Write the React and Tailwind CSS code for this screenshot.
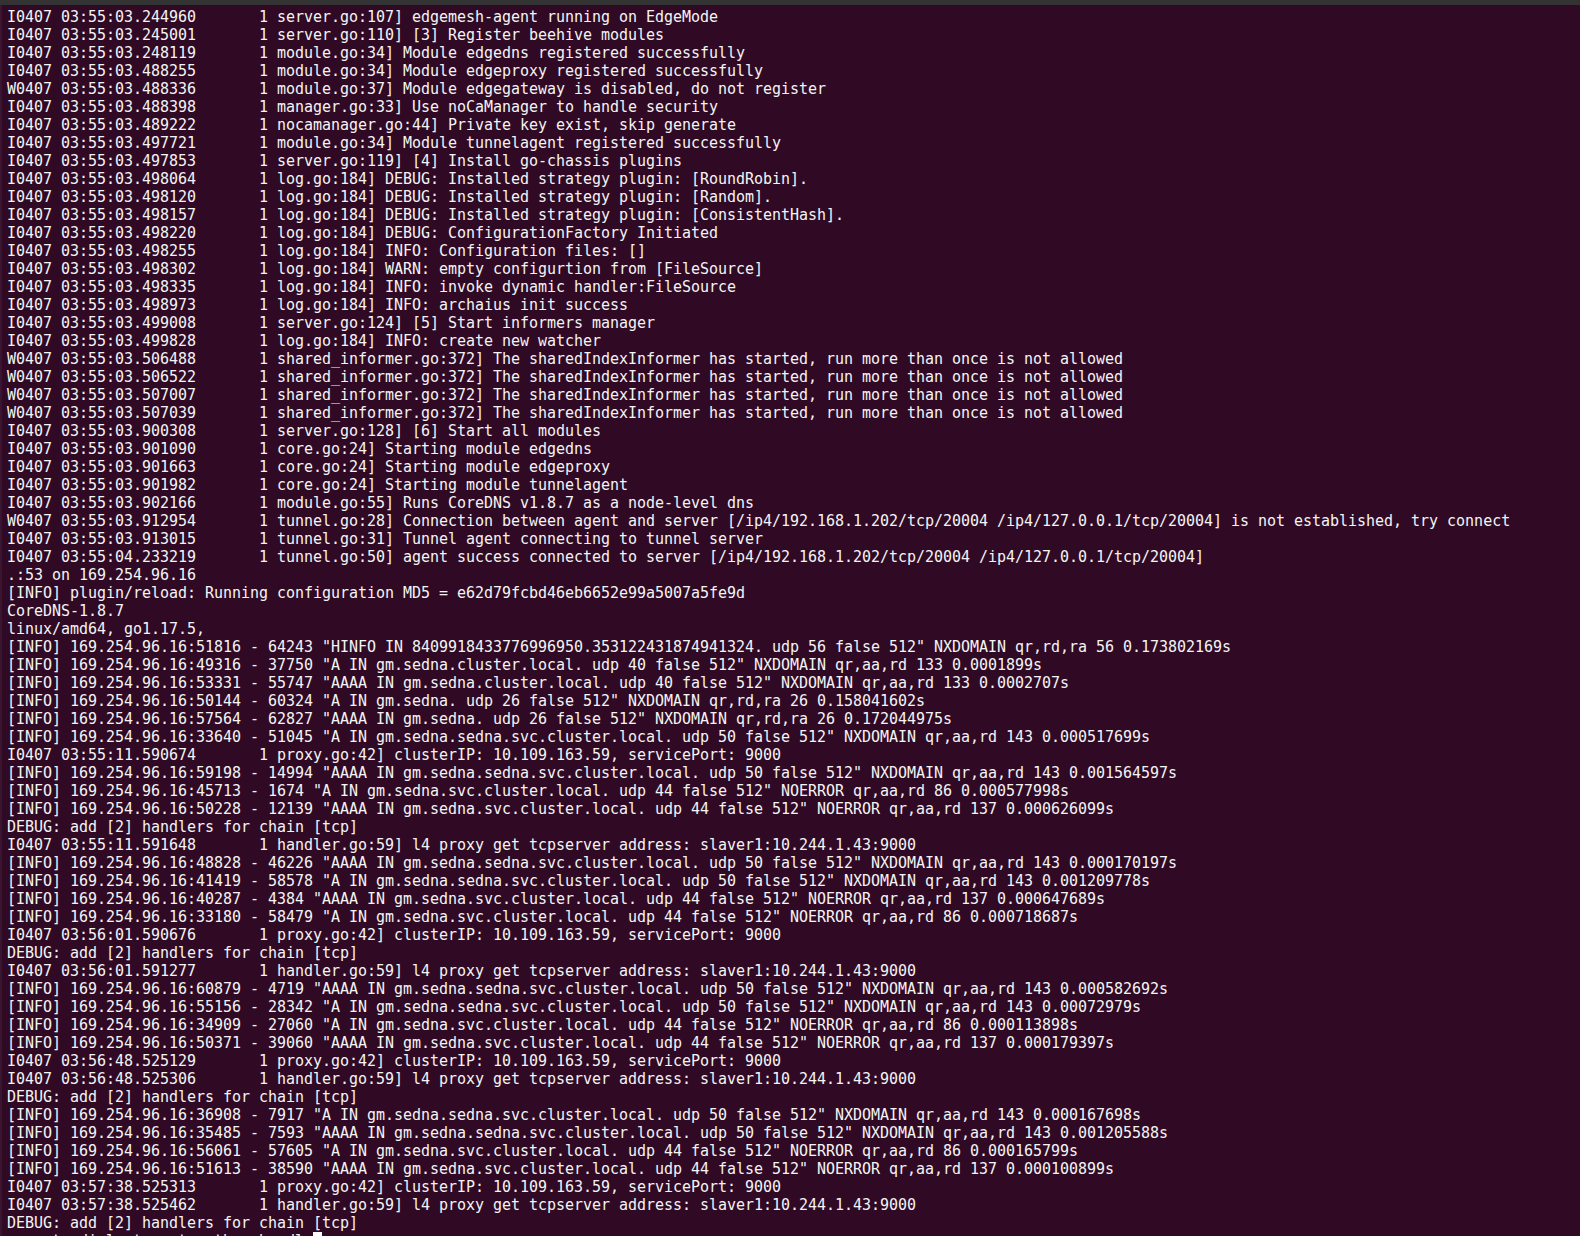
const klog = (lvl, time, src, msg) => `${lvl}0407 ${time}       1 ${src}] ${msg}`;

const informer = 'The sharedIndexInformer has started, run more than once is not allowed';
const tunnelPeers = '[/ip4/192.168.1.202/tcp/20004 /ip4/127.0.0.1/tcp/20004]';
const proxyMsg = 'clusterIP: 10.109.163.59, servicePort: 9000';
const handlerMsg = 'l4 proxy get tcpserver address: slaver1:10.244.1.43:9000';
const chain = 'DEBUG: add [2] handlers for chain [tcp]';
const dns = (port, id, q) => `[INFO] 169.254.96.16:${port} - ${id} ${q}`;

const LINES = [
  klog('I', '03:55:03.244960', 'server.go:107', 'edgemesh-agent running on EdgeMode'),
  klog('I', '03:55:03.245001', 'server.go:110', '[3] Register beehive modules'),
  klog('I', '03:55:03.248119', 'module.go:34', 'Module edgedns registered successfully'),
  klog('I', '03:55:03.488255', 'module.go:34', 'Module edgeproxy registered successfully'),
  klog('W', '03:55:03.488336', 'module.go:37', 'Module edgegateway is disabled, do not register'),
  klog('I', '03:55:03.488398', 'manager.go:33', 'Use noCaManager to handle security'),
  klog('I', '03:55:03.489222', 'nocamanager.go:44', 'Private key exist, skip generate'),
  klog('I', '03:55:03.497721', 'module.go:34', 'Module tunnelagent registered successfully'),
  klog('I', '03:55:03.497853', 'server.go:119', '[4] Install go-chassis plugins'),
  klog('I', '03:55:03.498064', 'log.go:184', 'DEBUG: Installed strategy plugin: [RoundRobin].'),
  klog('I', '03:55:03.498120', 'log.go:184', 'DEBUG: Installed strategy plugin: [Random].'),
  klog('I', '03:55:03.498157', 'log.go:184', 'DEBUG: Installed strategy plugin: [ConsistentHash].'),
  klog('I', '03:55:03.498220', 'log.go:184', 'DEBUG: ConfigurationFactory Initiated'),
  klog('I', '03:55:03.498255', 'log.go:184', 'INFO: Configuration files: []'),
  klog('I', '03:55:03.498302', 'log.go:184', 'WARN: empty configurtion from [FileSource]'),
  klog('I', '03:55:03.498335', 'log.go:184', 'INFO: invoke dynamic handler:FileSource'),
  klog('I', '03:55:03.498973', 'log.go:184', 'INFO: archaius init success'),
  klog('I', '03:55:03.499008', 'server.go:124', '[5] Start informers manager'),
  klog('I', '03:55:03.499828', 'log.go:184', 'INFO: create new watcher'),
  klog('W', '03:55:03.506488', 'shared_informer.go:372', informer),
  klog('W', '03:55:03.506522', 'shared_informer.go:372', informer),
  klog('W', '03:55:03.507007', 'shared_informer.go:372', informer),
  klog('W', '03:55:03.507039', 'shared_informer.go:372', informer),
  klog('I', '03:55:03.900308', 'server.go:128', '[6] Start all modules'),
  klog('I', '03:55:03.901090', 'core.go:24', 'Starting module edgedns'),
  klog('I', '03:55:03.901663', 'core.go:24', 'Starting module edgeproxy'),
  klog('I', '03:55:03.901982', 'core.go:24', 'Starting module tunnelagent'),
  klog('I', '03:55:03.902166', 'module.go:55', 'Runs CoreDNS v1.8.7 as a node-level dns'),
  klog('W', '03:55:03.912954', 'tunnel.go:28', `Connection between agent and server ${tunnelPeers} is not established, try connect`),
  klog('I', '03:55:03.913015', 'tunnel.go:31', 'Tunnel agent connecting to tunnel server'),
  klog('I', '03:55:04.233219', 'tunnel.go:50', `agent success connected to server ${tunnelPeers}`),
  '.:53 on 169.254.96.16',
  '[INFO] plugin/reload: Running configuration MD5 = e62d79fcbd46eb6652e99a5007a5fe9d',
  'CoreDNS-1.8.7',
  'linux/amd64, go1.17.5,',
  dns('51816', '64243', '"HINFO IN 8409918433776996950.353122431874941324. udp 56 false 512" NXDOMAIN qr,rd,ra 56 0.173802169s'),
  dns('49316', '37750', '"A IN gm.sedna.cluster.local. udp 40 false 512" NXDOMAIN qr,aa,rd 133 0.0001899s'),
  dns('53331', '55747', '"AAAA IN gm.sedna.cluster.local. udp 40 false 512" NXDOMAIN qr,aa,rd 133 0.0002707s'),
  dns('50144', '60324', '"A IN gm.sedna. udp 26 false 512" NXDOMAIN qr,rd,ra 26 0.158041602s'),
  dns('57564', '62827', '"AAAA IN gm.sedna. udp 26 false 512" NXDOMAIN qr,rd,ra 26 0.172044975s'),
  dns('33640', '51045', '"A IN gm.sedna.sedna.svc.cluster.local. udp 50 false 512" NXDOMAIN qr,aa,rd 143 0.000517699s'),
  klog('I', '03:55:11.590674', 'proxy.go:42', proxyMsg),
  dns('59198', '14994', '"AAAA IN gm.sedna.sedna.svc.cluster.local. udp 50 false 512" NXDOMAIN qr,aa,rd 143 0.001564597s'),
  dns('45713', '1674', '"A IN gm.sedna.svc.cluster.local. udp 44 false 512" NOERROR qr,aa,rd 86 0.000577998s'),
  dns('50228', '12139', '"AAAA IN gm.sedna.svc.cluster.local. udp 44 false 512" NOERROR qr,aa,rd 137 0.000626099s'),
  chain,
  klog('I', '03:55:11.591648', 'handler.go:59', handlerMsg),
  dns('48828', '46226', '"AAAA IN gm.sedna.sedna.svc.cluster.local. udp 50 false 512" NXDOMAIN qr,aa,rd 143 0.000170197s'),
  dns('41419', '58578', '"A IN gm.sedna.sedna.svc.cluster.local. udp 50 false 512" NXDOMAIN qr,aa,rd 143 0.001209778s'),
  dns('40287', '4384', '"AAAA IN gm.sedna.svc.cluster.local. udp 44 false 512" NOERROR qr,aa,rd 137 0.000647689s'),
  dns('33180', '58479', '"A IN gm.sedna.svc.cluster.local. udp 44 false 512" NOERROR qr,aa,rd 86 0.000718687s'),
  klog('I', '03:56:01.590676', 'proxy.go:42', proxyMsg),
  chain,
  klog('I', '03:56:01.591277', 'handler.go:59', handlerMsg),
  dns('60879', '4719', '"AAAA IN gm.sedna.sedna.svc.cluster.local. udp 50 false 512" NXDOMAIN qr,aa,rd 143 0.000582692s'),
  dns('55156', '28342', '"A IN gm.sedna.sedna.svc.cluster.local. udp 50 false 512" NXDOMAIN qr,aa,rd 143 0.00072979s'),
  dns('34909', '27060', '"A IN gm.sedna.svc.cluster.local. udp 44 false 512" NOERROR qr,aa,rd 86 0.000113898s'),
  dns('50371', '39060', '"AAAA IN gm.sedna.svc.cluster.local. udp 44 false 512" NOERROR qr,aa,rd 137 0.000179397s'),
  klog('I', '03:56:48.525129', 'proxy.go:42', proxyMsg),
  klog('I', '03:56:48.525306', 'handler.go:59', handlerMsg),
  chain,
  dns('36908', '7917', '"A IN gm.sedna.sedna.svc.cluster.local. udp 50 false 512" NXDOMAIN qr,aa,rd 143 0.000167698s'),
  dns('35485', '7593', '"AAAA IN gm.sedna.sedna.svc.cluster.local. udp 50 false 512" NXDOMAIN qr,aa,rd 143 0.001205588s'),
  dns('56061', '57605', '"A IN gm.sedna.svc.cluster.local. udp 44 false 512" NOERROR qr,aa,rd 86 0.000165799s'),
  dns('51613', '38590', '"AAAA IN gm.sedna.svc.cluster.local. udp 44 false 512" NOERROR qr,aa,rd 137 0.000100899s'),
  klog('I', '03:57:38.525313', 'proxy.go:42', proxyMsg),
  klog('I', '03:57:38.525462', 'handler.go:59', handlerMsg),
  chain,
];

// ─── Terminal window ──────────────────────────────────────────────────────────

export default function App() {
  return (
    <div className="h-[1236px] w-[1580px] overflow-hidden bg-[#300a24] flex flex-col">
      {/* window chrome strip */}
      <div className="h-[5px] shrink-0 bg-[#333333]" />

      <div
        className="flex-1 border-l-2 border-[#3a1530] pl-[5px] pt-[3px] text-[15px] leading-[18px] tracking-[-0.03px] text-[#f4f4f4]"
        style={{ fontFamily: '"DejaVu Sans Mono", "Liberation Mono", monospace' }}
      >
        {LINES.map((line, i) => (
          <div key={i} className="whitespace-pre h-[18px]">{line}</div>
        ))}
        <div className="whitespace-pre h-[18px] flex">
          <span>{'    at  dial  tcp  to  the  handle'}</span>
          <span className="inline-block w-[9px] h-[18px] bg-white" />
        </div>
      </div>
    </div>
  );
}
